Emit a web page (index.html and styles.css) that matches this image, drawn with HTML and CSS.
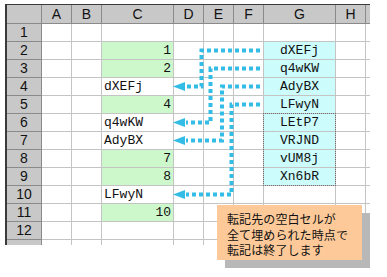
FILE: index.html
```html
<!DOCTYPE html>
<html lang="ja">
<head>
<meta charset="utf-8">
<link rel="stylesheet" href="styles.css">
</head>
<body>
<div class="stage">
  <div class="sheet">
    <div class="h corner"></div><div class="h">A</div><div class="h">B</div><div class="h">C</div><div class="h">D</div><div class="h">E</div><div class="h">F</div><div class="h">G</div><div class="h">H</div><div class="h edge"></div>

    <div class="rh">1</div><div class="c"></div><div class="c"></div><div class="c"></div><div class="c"></div><div class="c"></div><div class="c"></div><div class="c"></div><div class="c"></div><div class="c edge"></div>
    <div class="rh">2</div><div class="c"></div><div class="c"></div><div class="c g num">1</div><div class="c"></div><div class="c"></div><div class="c"></div><div class="c cy mid">dXEFj</div><div class="c"></div><div class="c edge"></div>
    <div class="rh">3</div><div class="c"></div><div class="c"></div><div class="c g num">2</div><div class="c"></div><div class="c"></div><div class="c"></div><div class="c cy mid">q4wKW</div><div class="c"></div><div class="c edge"></div>
    <div class="rh">4</div><div class="c"></div><div class="c"></div><div class="c txt">dXEFj</div><div class="c"></div><div class="c"></div><div class="c"></div><div class="c cy mid">AdyBX</div><div class="c"></div><div class="c edge"></div>
    <div class="rh">5</div><div class="c"></div><div class="c"></div><div class="c g num">4</div><div class="c"></div><div class="c"></div><div class="c"></div><div class="c cy mid">LFwyN</div><div class="c"></div><div class="c edge"></div>
    <div class="rh">6</div><div class="c"></div><div class="c"></div><div class="c txt">q4wKW</div><div class="c"></div><div class="c"></div><div class="c"></div><div class="c cy mid">LEtP7</div><div class="c"></div><div class="c edge"></div>
    <div class="rh">7</div><div class="c"></div><div class="c"></div><div class="c txt">AdyBX</div><div class="c"></div><div class="c"></div><div class="c"></div><div class="c cy mid">VRJND</div><div class="c"></div><div class="c edge"></div>
    <div class="rh">8</div><div class="c"></div><div class="c"></div><div class="c g num">7</div><div class="c"></div><div class="c"></div><div class="c"></div><div class="c cy mid">vUM8j</div><div class="c"></div><div class="c edge"></div>
    <div class="rh">9</div><div class="c"></div><div class="c"></div><div class="c g num">8</div><div class="c"></div><div class="c"></div><div class="c"></div><div class="c cy mid">Xn6bR</div><div class="c"></div><div class="c edge"></div>
    <div class="rh">10</div><div class="c"></div><div class="c"></div><div class="c txt">LFwyN</div><div class="c"></div><div class="c"></div><div class="c"></div><div class="c"></div><div class="c"></div><div class="c edge"></div>
    <div class="rh">11</div><div class="c"></div><div class="c"></div><div class="c g num">10</div><div class="c"></div><div class="c"></div><div class="c"></div><div class="c"></div><div class="c"></div><div class="c edge"></div>
    <div class="rh">12</div><div class="c"></div><div class="c"></div><div class="c"></div><div class="c"></div><div class="c"></div><div class="c"></div><div class="c"></div><div class="c"></div><div class="c edge"></div>
    <div class="rh last"></div><div class="c last"></div><div class="c last"></div><div class="c last"></div><div class="c last"></div><div class="c last"></div><div class="c last"></div><div class="c last"></div><div class="c last"></div><div class="c last edge"></div>
  </div>

  <svg class="arrows" width="387" height="277" viewBox="0 0 387 277">
    <g fill="none" stroke="#33bde6" stroke-width="4" stroke-dasharray="4 3">
      <path d="M260 50.5 H201.5 V86.5 H186"/>
      <path d="M260 68.5 H210.5 V122.5 H186"/>
      <path d="M260 86.5 H222 V140.5 H186"/>
      <path d="M260 104.5 H231.5 V194.5 H186"/>
    </g>
    <g fill="#33bde6">
      <polygon points="173,86.5 185,82 185,91"/>
      <polygon points="173,122.5 185,118 185,127"/>
      <polygon points="173,140.5 185,136 185,145"/>
      <polygon points="173,194.5 185,190 185,199"/>
    </g>
  </svg>

  <div class="marquee"></div>

  <div class="note-shadow"></div>
  <div class="note">
    <p>転記先の空白セルが<br>全て埋められた時点で<br>転記は終了します</p>
  </div>
</div>
</body>
</html>
```
FILE: styles.css
```css
html, body {
  margin: 0;
  padding: 0;
  background: #ffffff;
}

.stage {
  position: relative;
  width: 387px;
  height: 277px;
  overflow: hidden;
}

.sheet {
  margin: 4px 0 0 5px;
  display: grid;
  grid-template-columns: 35px 30px 30px 72px 30px 30px 30px 72px 30px 4px;
  grid-template-rows: 19px repeat(12, 18px) 5px;
  width: max-content;
  border-top: 1px solid #3a3a3a;
  border-left: 2px solid #3a3a3a;
}

.sheet > div {
  box-sizing: border-box;
  border-right: 1px solid #c4c4c4;
  border-bottom: 1px solid #c4c4c4;
  overflow: hidden;
  white-space: nowrap;
}

.h {
  background: #c8c8c8;
  border-right-color: #8a8a8a !important;
  border-bottom-color: #8a8a8a !important;
  font-family: "Liberation Sans", Arial, sans-serif;
  font-size: 14px;
  line-height: 18px;
  text-align: center;
  color: #111;
}

.rh {
  background: #c8c8c8;
  border-right-color: #8a8a8a !important;
  border-bottom-color: #8a8a8a !important;
  font-family: "Liberation Sans", Arial, sans-serif;
  font-size: 14px;
  line-height: 17px;
  text-align: center;
  color: #111;
}

.last {
  border-bottom: none !important;
}

.edge {
  border-right: none !important;
}

.c {
  font-family: "Liberation Mono", "DejaVu Sans Mono", monospace;
  font-size: 13px;
  line-height: 17px;
  color: #111;
}

.g {
  background: #ccf8cc;
}

.cy {
  background: #ccfcfc;
}

.num {
  text-align: right;
  padding-right: 2px;
}

.txt {
  text-align: left;
  padding-left: 2px;
}

.mid {
  text-align: center;
}

.arrows {
  position: absolute;
  left: 0;
  top: 0;
  pointer-events: none;
}

.marquee {
  position: absolute;
  left: 263px;
  top: 113px;
  width: 73px;
  height: 73px;
  box-sizing: border-box;
  border: 1px dotted #707070;
}

.note-shadow {
  position: absolute;
  left: 225px;
  top: 213px;
  width: 145px;
  height: 55px;
  background: #b8b8b8;
}

.note {
  position: absolute;
  left: 217px;
  top: 205px;
  width: 145px;
  height: 55px;
  box-sizing: border-box;
  padding: 6px 0 0 10px;
  background: #fdc999;
}

.note p {
  margin: 0;
  font-family: "Noto Sans CJK JP", sans-serif;
  font-size: 12px;
  line-height: 15.5px;
  color: #111;
  letter-spacing: 0.1px;
}
```
